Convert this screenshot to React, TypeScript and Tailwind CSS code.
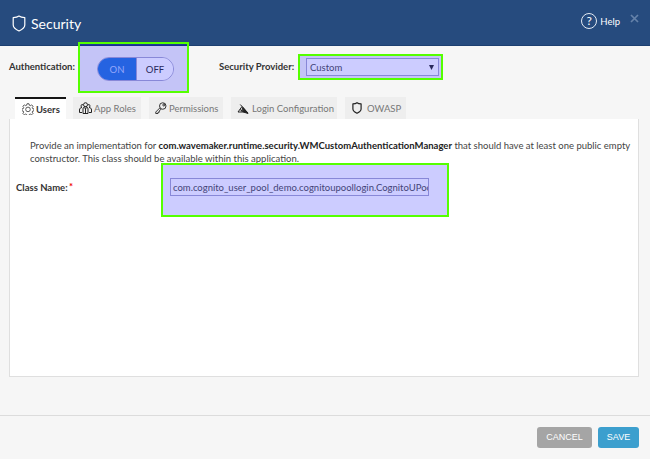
import type { ReactNode } from "react";

function Shield({ className, stroke, width }: { className: string; stroke: string; width: number }) {
  return (
    <svg className={className} viewBox="0 0 14 17" fill="none" stroke={stroke} strokeWidth={width} strokeLinejoin="round">
      <path d="M7 1 C5.5 2.2 3.5 2.6 1.2 2.6 V10 C1.2 13 4 14.6 7 16 C10 14.6 12.8 13 12.8 10 V2.6 C10.5 2.6 8.5 2.2 7 1Z" />
    </svg>
  );
}

function Gear() {
  return (
    <svg className="h-3 w-3 shrink-0" viewBox="0 0 24 24" fill="none" stroke="#333" strokeWidth="1.6" strokeLinejoin="round">
      <path d="M10 1.5h4l.7 3 2 .8 2.6-1.6 2.8 2.8-1.6 2.7.8 2 2.9.7v3.6l-3 .8-.8 2 1.6 2.6-2.8 2.8-2.6-1.6-2 .8-.7 2.6h-4l-.7-2.6-2-.8-2.6 1.6-2.8-2.8 1.6-2.6-.8-2-2.9-.8v-3.6l2.9-.7.8-2-1.6-2.7 2.8-2.8 2.6 1.6 2-.8z" />
      <circle cx="12" cy="12.8" r="4.6" />
    </svg>
  );
}

function People() {
  return (
    <svg className="h-3 w-[13px] shrink-0" viewBox="0 0 26 24" fill="none" stroke="#222" strokeWidth="2">
      <circle cx="13" cy="5.5" r="4" />
      <path d="M8 23V14c0-3 2-4.500 5-4.500s5 1.500 5 4.500v9z" />
      <path d="M8 5.500C4 4 3 8 5 10M18 5.500c4-1.500 5 2.500 3 4.500M6 11c-3 0-5 2-5 5v5h5M20 11c3 0 5 2 5 5v5h-5M11 11l2 3 2-3M13 14v8" />
    </svg>
  );
}

function KeyIcon() {
  return (
    <svg className="h-3 w-3 shrink-0" viewBox="0 0 24 24" fill="none" stroke="#222" strokeWidth="1.800" strokeLinejoin="round">
      <circle cx="15.500" cy="8" r="6.500" />
      <circle cx="17.500" cy="6" r="2" />
      <path d="M10 11.500 1.500 20v3H6v-2.500h2.500V18l4-4" />
    </svg>
  );
}

function LoginIcon() {
  return (
    <svg className="h-[11px] w-3 shrink-0" viewBox="0 0 24 22" fill="none" stroke="#222" strokeWidth="2">
      <path d="M6.500 3 22 20M10 7 2 18h18M6 13l8 5M11 9l-1 9" />
      <path d="M12 9l10 12-9-3z" fill="#222" />
    </svg>
  );
}

function Tab({ icon, label, className }: { icon: ReactNode; label: string; className: string }) {
  return (
    <div className={`flex h-[22px] items-center whitespace-nowrap bg-[#eeeeee] text-[#777] ${className}`}>
      {icon}
      <span>{label}</span>
    </div>
  );
}

export default function App() {
  return (
    <div className="relative flex h-[459px] w-[650px] flex-col overflow-hidden bg-[#f6f6f6] font-['Lato',sans-serif] text-[9.500px] leading-[13px] text-[#444]">
      <header className="flex h-[46px] shrink-0 items-start border-b border-[#1c3f70] bg-[#264b7e] text-white">
        <Shield className="ml-3 mt-[15px] h-[17px] w-[14px]" stroke="#fff" width={1.2} />
        <h1 className="ml-[5px] mt-[15px] text-[14px] leading-[18px]">Security</h1>
        <div className="ml-auto mt-[13px] flex items-center">
          <div className="flex h-4 w-4 items-center justify-center rounded-full border border-[#e3eaf3] text-[12px] leading-none">?</div>
          <span className="ml-[3px] text-[9.500px]">Help</span>
        </div>
        <svg className="ml-[10px] mr-[11px] mt-[14px] h-[9px] w-[9px]" viewBox="0 0 9 9" stroke="#6582aa" strokeWidth="1.700">
          <path d="M1 1l7 7M8 1L1 8" />
        </svg>
      </header>

      <div className="flex h-[51px] shrink-0 items-start font-bold text-[#333]">
        <span className="ml-[9px] mt-[14px] w-[68px] whitespace-nowrap">Authentication:</span>
        <div className="ml-5 mt-[11px] flex h-6 w-[77px] overflow-hidden rounded-full border border-[#aaaacf] text-[9.500px] font-normal">
          <div className="flex w-[38px] items-center justify-center bg-[#2f7cda] text-[#b9d0fa]">ON</div>
          <div className="flex flex-1 items-center justify-center border-l border-[#aaaacf] bg-white text-[#333]">OFF</div>
        </div>
        <span className="ml-[45px] mt-[14px] w-[73px] whitespace-nowrap">Security Provider:</span>
        <div className="ml-[14px] mt-3 flex h-[18px] w-[133px] items-center border border-[#aaaacf] bg-white pl-[3px] pr-[4px] font-normal text-[#555]">
          <span>Custom</span>
          <svg className="ml-auto h-[5px] w-[5px]" viewBox="0 0 5 5" fill="#333"><path d="M0 0h5L2.500 5z" /></svg>
        </div>
      </div>

      <nav className="flex h-[22px] shrink-0 pl-[15px]">
        <div className="flex h-[22px] w-[51px] items-center border-t-2 border-[#151515] bg-white pl-[7px] font-bold text-[#333]">
          <Gear />
          <span className="ml-[2px]">Users</span>
        </div>
        <Tab className="ml-[7px] w-[68px] gap-[2px] pl-[6px]" icon={<People />} label="App Roles" />
        <Tab className="ml-2 w-[74px] gap-[2px] pl-[6px]" icon={<KeyIcon />} label="Permissions" />
        <Tab className="ml-2 w-[106px] gap-[3px] pl-[6px]" icon={<LoginIcon />} label="Login Configuration" />
        <Tab className="ml-2 w-[61px] gap-[5px] pl-[7px]" icon={<Shield className="h-3 w-[10px]" stroke="#222" width={1.7} />} label="OWASP" />
      </nav>

      <main className="ml-[9px] h-[258px] w-[630px] shrink-0 border border-t-0 border-[#dfdfdf] bg-white">
        <p className="ml-5 mt-[20px] whitespace-nowrap">
          Provide an implementation for <b className="text-[#222]">com.wavemaker.runtime.security.WMCustomAuthenticationManager</b> that should have at least one public empty
          <br />
          constructor. This class should be available within this application.
        </p>
        <div className="mt-[13px] flex items-center">
          <label className="ml-[6px] w-[53px] font-bold text-[#333]">Class Name:</label>
          <span className="w-[101px] font-bold leading-none text-[#f00000]">*</span>
          <div className="flex h-[18px] w-[259px] items-center overflow-hidden whitespace-nowrap border border-[#aaaacf] bg-white pl-[2px] text-[#555]">com.cognito_user_pool_demo.cognitoupoollogin.CognitoUPoo</div>
        </div>
      </main>

      <footer className="mt-[38px] flex h-11 shrink-0 items-start justify-end gap-[6px] border-t border-[#dcdcdc] pr-[11px] pt-[11px] font-['Liberation_Sans',sans-serif] text-[9px] text-white">
        <button className="h-[21px] w-[55px] rounded-[3px] bg-[#a5a5a5]">CANCEL</button>
        <button className="h-[21px] w-[41px] rounded-[3px] bg-[#3c9fce]">SAVE</button>
      </footer>

      <div className="absolute left-[78px] top-[42px] h-[51px] w-[111px] border-2 border-[#55ff00] bg-[#0000ff]/20" />
      <div className="absolute left-[298px] top-[54px] h-[26px] w-[145px] border-2 border-[#55ff00] bg-[#0000ff]/20" />
      <div className="absolute left-[161px] top-[163px] h-[54px] w-[288px] border-2 border-[#55ff00] bg-[#0000ff]/20" />
    </div>
  );
}
